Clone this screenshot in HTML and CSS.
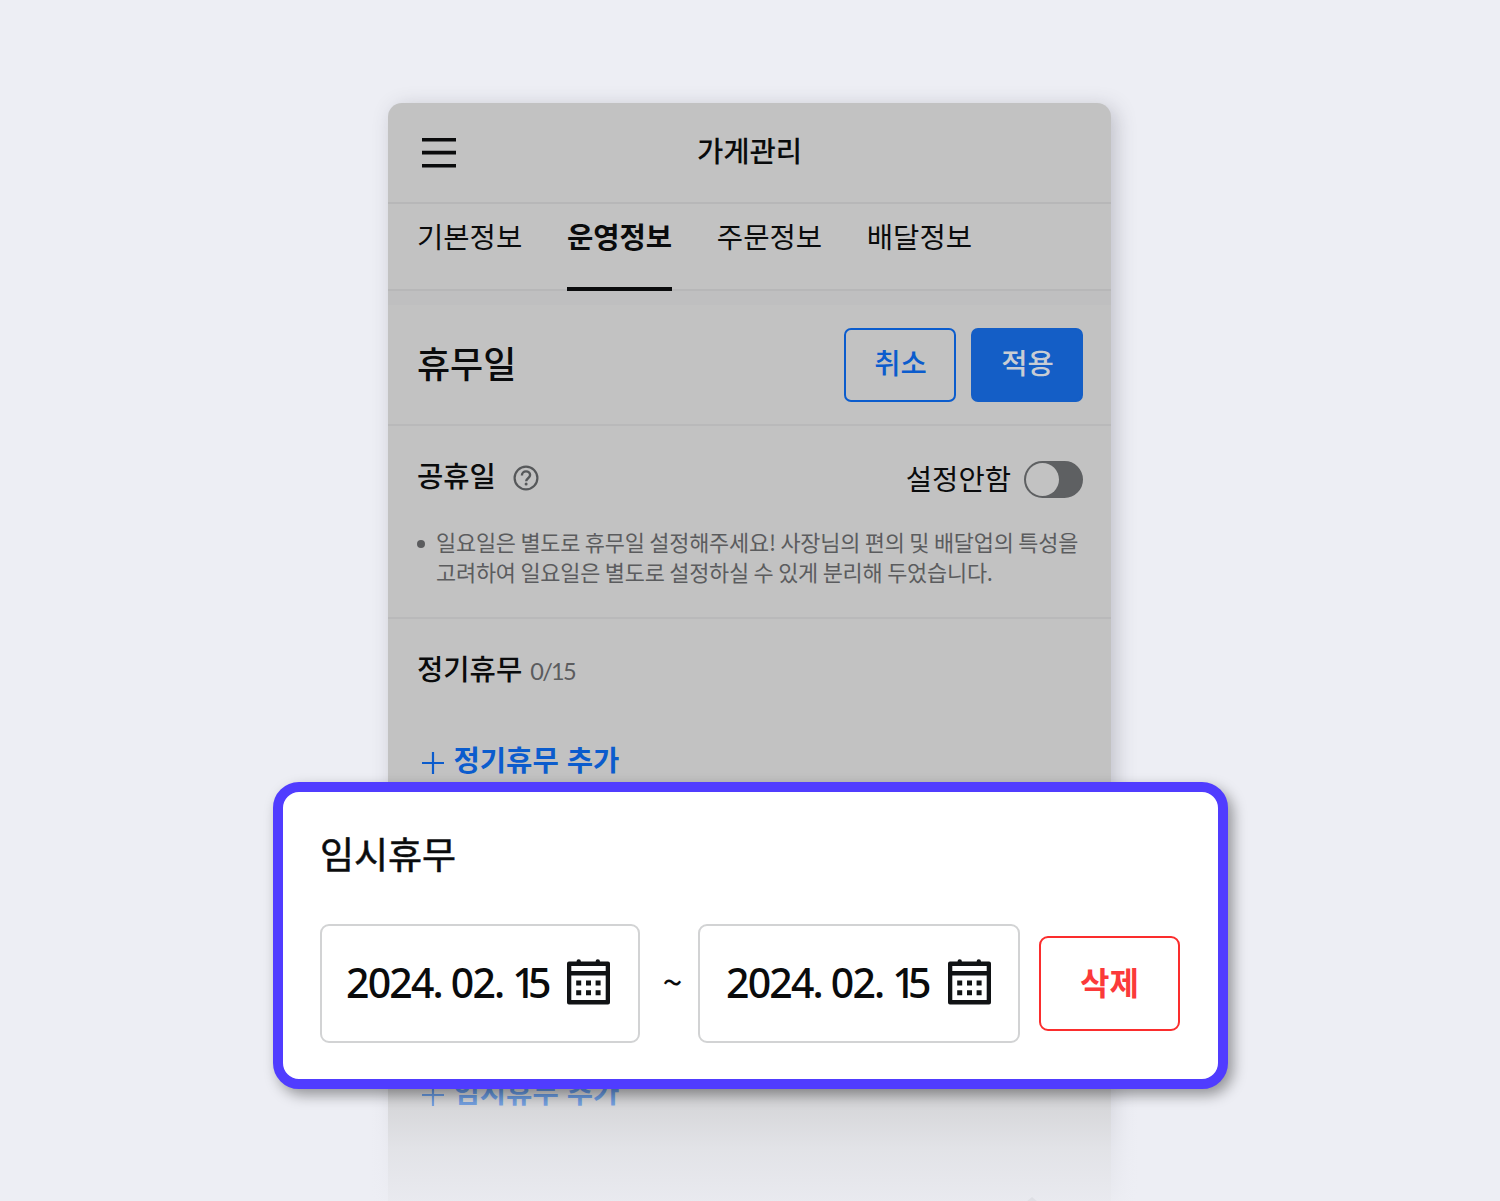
FILE: index.html
```
<!DOCTYPE html>
<html lang="ko">
<head>
    <meta charset="UTF-8">
    <meta name="viewport" content="width=device-width, initial-scale=1.0">
    <title>가게관리</title>
    <link rel="stylesheet" href="styles.css">
</head>
<body>
    <div class="phone">
        <header class="top-bar">
            <svg class="menu-icon" width="34" height="32" viewBox="0 0 34 32">
                <path d="M0 2.7h34M0 15.6h34M0 28.7h34" stroke="#0a0b0c" stroke-width="3.6"/>
            </svg>
            <h1>가게관리</h1>
        </header>
        <nav class="tabs">
            <a class="tab">기본정보</a>
            <a class="tab active">운영정보</a>
            <a class="tab">주문정보</a>
            <a class="tab">배달정보</a>
        </nav>
        <div class="divider"></div>
        <section class="title-row">
            <h2>휴무일</h2>
            <div class="actions">
                <button class="btn btn-line">취소</button>
                <button class="btn btn-fill">적용</button>
            </div>
        </section>
        <section class="holiday">
            <div class="holiday-head">
                <h3>공휴일</h3>
                <svg class="help-icon" width="26" height="26" viewBox="0 0 26 26" fill="none" stroke="#56585a">
                    <circle cx="13" cy="13" r="11.4" stroke-width="2.2"/>
                    <path d="M8.9 10.4c0-2.4 1.8-4 4.1-4s4.1 1.5 4.1 3.7c0 3.1-3.9 3.2-3.9 6.1" stroke-width="2.4"/>
                    <circle cx="13.1" cy="19" r="1.5" fill="#56585a" stroke="none"/>
                </svg>
                <span class="toggle-label">설정안함</span>
                <span class="toggle"></span>
            </div>
            <ul class="notice">
                <li>일요일은 별도로 휴무일 설정해주세요! 사장님의 편의 및 배달업의 특성을<br>고려하여 일요일은 별도로 설정하실 수 있게 분리해 두었습니다.</li>
            </ul>
        </section>
        <section class="regular">
            <h3>정기휴무 <span class="count">0/15</span></h3>
            <a class="add">
                <svg width="24" height="24" viewBox="0 0 24 24"><path d="M1 12h22M12 1v22" stroke="#0b5ccd" stroke-width="2.2"/></svg>
                정기휴무 추가
            </a>
            <a class="add add-temp">
                <svg width="24" height="24" viewBox="0 0 24 24"><path d="M1 12h22M12 1v22" stroke="#0b5ccd" stroke-width="2.2"/></svg>
                임시휴무 추가
            </a>
        </section>
        <svg class="to-top" width="12" height="4" viewBox="0 0 12 4"><path d="M0 5 6 0l6 5" fill="#5b5c5e"/></svg>
    </div>

    <div class="popup">
        <h2>임시휴무</h2>
        <div class="range">
            <div class="date">
                <span>2024. 02. <span class="one">1</span>5</span>
                <svg class="calendar" width="43" height="46" viewBox="0 0 43 46" fill="#111315">
                    <path fill-rule="evenodd" d="M2 2.5H9.5A2.2 2.2 0 0 1 13.9 2.5H28.6A2.2 2.2 0 0 1 33 2.5H41Q43 2.5 43 4.5V43.5Q43 45.5 41 45.5H2Q0 45.5 0 43.5V4.5Q0 2.5 2 2.5ZM4.3 6.9V12H38.7V6.9ZM4.3 16.6V41H38.7V16.6Z"/>
                    <path d="M9.2 21.5h5v5h-5zM19 21.5h5v5h-5zM28.6 21.5h5v5h-5zM9.2 31.2h5v5h-5zM19 31.2h5v5h-5zM28.6 31.2h5v5h-5z"/>
                </svg>
            </div>
            <span class="tilde">~</span>
            <div class="date date-end">
                <span>2024. 02. <span class="one">1</span>5</span>
                <svg class="calendar" width="43" height="46" viewBox="0 0 43 46" fill="#111315">
                    <path fill-rule="evenodd" d="M2 2.5H9.5A2.2 2.2 0 0 1 13.9 2.5H28.6A2.2 2.2 0 0 1 33 2.5H41Q43 2.5 43 4.5V43.5Q43 45.5 41 45.5H2Q0 45.5 0 43.5V4.5Q0 2.5 2 2.5ZM4.3 6.9V12H38.7V6.9ZM4.3 16.6V41H38.7V16.6Z"/>
                    <path d="M9.2 21.5h5v5h-5zM19 21.5h5v5h-5zM28.6 21.5h5v5h-5zM9.2 31.2h5v5h-5zM19 31.2h5v5h-5zM28.6 31.2h5v5h-5z"/>
                </svg>
            </div>
            <button class="delete">삭제</button>
        </div>
    </div>
</body>
</html>
```
FILE: styles.css
```
* {
    box-sizing: border-box;
}
body {
    position: relative;
    height: 1201px;
    margin: 0;
    padding-top: 103px;
    overflow: hidden;
    background: #edeef4;
    color: #0a0b0c;
    font-family: "Noto Sans CJK KR", sans-serif;
    font-size: 28.6px;
}
h1, h2, h3 {
    margin: 0;
    font-weight: 500;
}
button {
    padding: 0;
    font-family: inherit;
}

/* dimmed phone screen */
.phone {
    position: relative;
    width: 723px;
    height: 1098px;
    margin-left: 388px;
    border-radius: 14px 14px 0 0;
    background: #c2c2c2;
    box-shadow: 5px 4px 20px rgba(60, 62, 80, 0.26);
}
/* fades the bottom of the screen into the page */
.phone::after {
    content: "";
    position: absolute;
    left: -30px;
    right: -40px;
    bottom: 0;
    height: 230px;
    background: linear-gradient(rgba(237, 238, 244, 0), rgba(237, 238, 244, 0.35) 50%, rgba(237, 238, 244, 0.74) 77%, rgba(237, 238, 244, 0.9));
}
.to-top {
    position: absolute;
    left: 638px;
    bottom: 0;
}
.top-bar {
    display: grid;
    grid-template-columns: 34px 1fr 34px;
    align-items: center;
    height: 101px;
    padding: 0 34px;
    border-bottom: 2px solid #b7b7b8;
}
.top-bar h1 {
    padding-bottom: 6px;
    text-align: center;
    font-size: 28.6px;
    line-height: 40px;
}
.tabs {
    display: flex;
    gap: 44.7px;
    height: 87px;
    padding: 0 29px;
    border-bottom: 2px solid #b7b7b8;
}
.tab {
    height: 87px;
    padding-top: 12px;
    line-height: 40px;
}
.tab.active {
    border-bottom: 4px solid #0a0b0c;
    font-weight: 700;
}
.divider {
    height: 14px;
    background: #bfbfc0;
}
.title-row {
    display: flex;
    justify-content: space-between;
    align-items: center;
    height: 121px;
    padding: 0 28px 0 29px;
    border-bottom: 2px solid #b9b9ba;
}
.title-row h2 {
    font-size: 36px;
    line-height: 50px;
    padding-bottom: 6px;
}
.actions {
    display: flex;
    gap: 15px;
}
.btn {
    width: 112px;
    height: 74px;
    padding: 0 0 7px 1px;
    border: 2px solid #0b5ccd;
    border-radius: 7px;
    font-size: 28.6px;
    font-weight: 500;
}
.btn-line {
    background: none;
    color: #0b5ccd;
}
.btn-fill {
    border-color: #145ec6;
    background: #145ec6;
    color: #c8cdd4;
}
.holiday {
    height: 193px;
    padding: 33px 28px 0 29px;
    border-bottom: 2px solid #b9b9ba;
}
.holiday-head {
    display: flex;
    align-items: center;
    height: 40px;
}
.holiday h3, .regular h3 {
    font-size: 28.6px;
    line-height: 40px;
}
.holiday h3 {
    padding-bottom: 9px;
}
.help-icon {
    margin-left: 17px;
    margin-bottom: 3px;
}
.toggle-label {
    margin-left: auto;
    padding-bottom: 2px;
    line-height: 40px;
}
.toggle {
    width: 59px;
    height: 37px;
    margin-left: 13px;
    border: 2px solid #5e6062;
    border-radius: 19px;
    background: #5e6062;
}
.toggle::before {
    content: "";
    display: block;
    width: 33px;
    height: 33px;
    border-radius: 50%;
    background: #c2c2c2;
}
.notice {
    margin: 28px 0 0;
    padding: 0 0 0 19px;
    list-style: none;
    color: #5b5c5e;
    font-size: 21.9px;
    line-height: 29.5px;
    letter-spacing: -0.2px;
    word-spacing: -1.3px;
    white-space: nowrap;
}
.notice li::before {
    content: "";
    float: left;
    width: 8px;
    height: 8px;
    margin: 13px 0 0 -19px;
    border-radius: 50%;
    background: #5b5c5e;
}
.regular {
    padding: 29px 29px 0;
}
.count {
    color: #5b5c5e;
    font-family: Lato, sans-serif;
    font-size: 23.5px;
    font-weight: 400;
    letter-spacing: -1.7px;
}
.add {
    display: flex;
    align-items: center;
    gap: 8.5px;
    margin: 48px 0 0 4px;
    height: 40px;
    color: #0b5ccd;
    font-weight: 700;
    line-height: 40px;
}
.add svg {
    margin-top: 8px;
}
.add-temp {
    margin-top: 292px;
}

/* highlighted panel */
.popup {
    position: absolute;
    left: 273px;
    top: 782px;
    width: 955px;
    height: 307px;
    padding: 34px 37px 0;
    border: 10px solid #503cff;
    border-radius: 26px;
    background: #fff;
    box-shadow: 5px 6px 14px rgba(0, 0, 0, 0.38);
}
.popup h2 {
    font-size: 37px;
    font-weight: 400;
    line-height: 54px;
    -webkit-text-stroke: 0.6px #111315;
}
.range {
    display: flex;
    align-items: center;
    margin-top: 44px;
}
.date {
    display: flex;
    justify-content: space-between;
    align-items: center;
    width: 320px;
    height: 119px;
    padding: 0 28px 4px 24px;
    border: 2px solid #d2d3d4;
    border-radius: 9px;
    font-family: "Noto Sans", sans-serif;
    font-size: 41px;
    font-weight: 500;
    letter-spacing: -1.8px;
    white-space: nowrap;
}
.date-end {
    width: 322px;
    padding: 0 27px 4px 26px;
}
.one {
    letter-spacing: -7.8px;
}
.calendar {
    flex: none;
}
.tilde {
    width: 58px;
    padding: 0 0 8px 7px;
    text-align: center;
    font-size: 36px;
}
.delete {
    width: 141px;
    height: 95px;
    margin-left: 19px;
    padding-bottom: 6px;
    border: 2px solid #fb2d2d;
    border-radius: 9px;
    background: #fff;
    color: #fb3a3a;
    font-size: 32px;
    font-weight: 700;
}
```
